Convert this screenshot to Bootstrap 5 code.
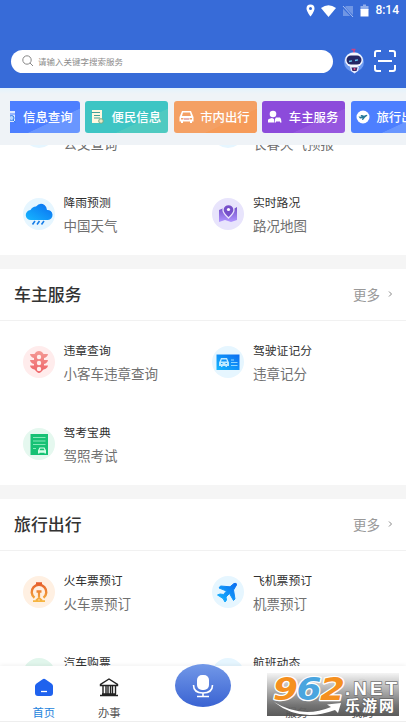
<!DOCTYPE html>
<html lang="zh-CN">
<head>
<meta charset="utf-8">
<meta name="viewport" content="width=device-width, initial-scale=1">
<title>首页</title>
<link href="https://cdn.jsdelivr.net/npm/bootstrap@5.3.0/dist/css/bootstrap.min.css" rel="stylesheet">
<style>
body{font-family:"Noto Sans CJK SC",sans-serif;height:722px;overflow:hidden;color:#333;background:#fff}
svg{display:block;flex:none}
.app-head{height:88px;background:#376bd8}
.status{height:21px;padding-right:7px;gap:6px;color:#fff;font:500 12px/21px Roboto,sans-serif}
.search-row{margin-top:28px;padding:0 10px 0 11px;height:24px}
.search{width:322px;height:23px;padding-left:11px;gap:4px;font-size:8.5px;color:#8c8c8c}
.robot{margin-left:10px}
.scan{margin-left:9px}
.strip{height:57px;background:linear-gradient(#e3f3fd,#eff3f7 6px);padding:13px 0 0 10px}
.chips{gap:5.6px;margin-left:-13.5px}
.chip{width:83px;height:32px;border-radius:3px;color:#fff;font-size:12.4px;font-weight:500;padding-left:5px;gap:6.5px;white-space:nowrap}
.c-blue{background:linear-gradient(155deg,#4d7fff 65%,#6996ff 66%)}
.c-teal{background:linear-gradient(155deg,#3ec5c4 65%,#4fcac1 66%)}
.c-orange{background:linear-gradient(155deg,#f4a064 65%,#f69b59 66%)}
.c-purple{background:linear-gradient(155deg,#8c4bdb 65%,#9657df 66%)}
.feed{min-height:0}
.feed-inner{margin-top:-54px}
.tiles{display:grid;grid-template-columns:189.5px 1fr;padding-left:22.5px}
.tile{height:82px;gap:9px}
.t1{font-size:11.8px;line-height:18px;color:#303030}
.t2{font-size:13.5px;line-height:20px;color:#707070;margin-top:4px}
.band{height:14px;background:#f5f5f5}
.sec{height:52px;border-bottom:1px solid #f1f1f1;padding:0 13px 1px 14px}
.sec-title{font-size:16.9px;font-weight:500;line-height:24px}
.more{font-size:13.5px;color:#999;gap:8px}
.tabbar{height:56px;background:#fff;box-shadow:0 -1px 4px #0000000f;border-bottom:1px solid #eee;padding-left:11px}
.tab{width:65.5px;font-size:11.3px;line-height:16px;color:#555;padding-top:11px;gap:7px}
.tab.on{color:#2584dc}
.mic{width:56px;margin:-3px 33px 0 33px}
.wm{right:7px;top:7px;width:132px;height:43px}
</style>
</head>
<body class="d-flex flex-column">
<header class="app-head flex-shrink-0">
  <div class="status d-flex justify-content-end align-items-center">
    <svg width="9" height="13" viewBox="0 0 9 13"><path fill="#fff" fill-rule="evenodd" d="M4.500.5A4 4 0 0 0 .5 4.500C.5 7.500 4.500 12.500 4.500 12.500S8.500 7.500 8.500 4.500A4 4 0 0 0 4.500.5M4.500 3a1.500 1.500 0 1 1 0 3a1.500 1.500 0 0 1 0-3"/></svg>
    <svg width="15" height="12" viewBox="0 0 15 12"><path fill="#fff" d="M0 3Q7.500-2.600 15 3L7.500 12z"/></svg>
    <svg width="12" height="12" viewBox="0 0 12 12"><path fill="#7096e4" d="M4 1h7v10H1V4z"/><path stroke="#376bd8" stroke-width="2.500" d="M0 1l11 11"/><path stroke="#a9c0f1" d="M1 1l10 11"/></svg>
    <svg width="9" height="13" viewBox="0 0 9 13"><path fill="#92aeea" d="M.5 2H3V.5h3V2h2.500v4h-8z"/><path fill="#fff" d="M.5 5h8v7.500h-8z"/></svg>
    <span>8:14</span>
  </div>
  <div class="search-row d-flex align-items-center">
    <div class="search bg-white rounded-pill d-flex align-items-center">
      <svg width="12" height="12" viewBox="0 0 12 12" fill="none" stroke="#888"><circle cx="5" cy="5" r="4.200"/><path d="M8 8l3 3"/></svg>
      <span>请输入关键字搜索服务</span>
    </div>
    <svg class="robot" width="22" height="28" viewBox="0 0 22 28"><circle cx="11" cy="15" r="10" fill="#709cf0"/><path d="M11 6V2M8.500 2.500h4" stroke="#c94384" stroke-width="1.500"/><ellipse cx="11" cy="13" rx="9" ry="7.500" fill="#f4f7ff"/><rect x="3.500" y="8.500" width="15" height="9" rx="4.500" fill="#252765"/><path d="M6 14.500l3-.6M12 13.500l3-.6" stroke="#63c9f7" stroke-width="1.300"/><path d="M7 20h9l-1 4-3.500 2.500L8 24z" fill="#e3eaff"/><path d="M8.500 20.500h6l-1 3.500h-4z" fill="#3a2765"/><circle cx="11.500" cy="22" r="1" fill="#ee5588"/></svg>
    <svg class="scan" width="22" height="22" viewBox="0 0 22 22" fill="none" stroke="#fff" stroke-width="2"><path d="M7 1H3Q1 1 1 3v4M15 1h4q2 0 2 2v4M1 15v4q0 2 2 2h4M21 15v4q0 2-2 2h-4M4 11h14"/></svg>
  </div>
</header>

<div class="strip flex-shrink-0">
  <div class="overflow-hidden">
    <div class="chips d-flex">
      <div class="chip c-blue d-flex align-items-center flex-shrink-0"><svg width="15" height="16" viewBox="0 0 15 16"><rect x="1" y="2" width="12" height="11" fill="#dfeaff"/><path d="M1 5h12" stroke="#4d7fff"/><circle cx="9.500" cy="9" r="2.500" fill="#b5d4ff" stroke="#2e7ce5"/><path d="M11 11l2.500 2.500" stroke="#2e7ce5"/></svg>信息查询</div>
      <div class="chip c-teal d-flex align-items-center flex-shrink-0"><svg width="15" height="17" viewBox="0 0 15 17"><path d="M2 1h10v13H2z" fill="#fff8df"/><path d="M1.500 3.500H10M4 6.500h6M4 9h6" stroke="#429f97" stroke-width="1.200"/><circle cx="11" cy="12" r="2.300" fill="#eee9c7" stroke="#75aa87"/></svg>便民信息</div>
      <div class="chip c-orange d-flex align-items-center flex-shrink-0"><svg width="15" height="14" viewBox="0 0 15 14"><path fill="#fff" fill-rule="evenodd" d="M3 1h9l2 5 .5 1v4.500H13V13h-2v-1.500H4V13H2v-1.500H.5V7L1 6zm1 1.500L3 6h9l-1-3.500zM2 8v1.500h2.500V8zm8.500 0v1.500H13V8z"/><path d="M5 9h5" stroke="#cc6670"/></svg>市内出行</div>
      <div class="chip c-purple d-flex align-items-center flex-shrink-0"><svg width="15" height="14" viewBox="0 0 15 14" fill="#fff"><circle cx="6" cy="4" r="3.300"/><path d="M1 12.500V10q0-1 4-2l2 1V12.500zM8 9l1-1.500h4L14 9l.5 3.500H13v-1H9v1H7.500z"/></svg>车主服务</div>
      <div class="chip c-blue d-flex align-items-center flex-shrink-0"><svg width="14" height="14" viewBox="0 0 14 14"><circle cx="7" cy="7" r="6.500" fill="#fff"/><path d="M2.500 6.500l3 .2L4.500 5H6l2 .8 2.500-1 1 .8-2.500 2L7 10H6l.5-1.800L4 8.500z" fill="#267a99"/></svg>旅行出行</div>
    </div>
  </div>
</div>

<main class="feed flex-fill overflow-hidden">
  <div class="feed-inner">
    <div class="tiles">
      <div class="tile d-flex align-items-center"><svg width="32" height="32"><circle cx="16" cy="16" r="16" fill="#e6f6ff"/></svg><div><div class="t1">公交查询</div><div class="t2">公交查询</div></div></div>
      <div class="tile d-flex align-items-center"><svg width="32" height="32"><circle cx="16" cy="16" r="16" fill="#e6f6ff"/></svg><div><div class="t1">天气预报</div><div class="t2">长春天气预报</div></div></div>
      <div class="tile d-flex align-items-center">
        <svg width="32" height="32" viewBox="0 0 32 32"><defs><linearGradient id="gb" x1="1" y1="0" x2="0" y2="1"><stop stop-color="#0a6cf0"/><stop offset="1" stop-color="#16b7ff"/></linearGradient></defs><circle cx="16" cy="16" r="16" fill="#e6f6ff"/><path fill="url(#gb)" d="M8 22A5 5 0 0 1 7.500 12A7 7 0 0 1 13 8.500Q17 4 21.500 7Q24 9 24 12A5 5 0 0 1 25 22z"/><path d="M12 23l-2.500 3.500M16.500 23L14 26.500M21 23l-2.500 3.500" stroke="#167de8" stroke-width="1.600"/></svg>
        <div><div class="t1">降雨预测</div><div class="t2">中国天气</div></div></div>
      <div class="tile d-flex align-items-center">
        <svg width="32" height="32" viewBox="0 0 32 32"><defs><linearGradient id="gp" x1="0" y1="0" x2="0" y2="1"><stop stop-color="#7350c7"/><stop offset="1" stop-color="#b094ff"/></linearGradient></defs><circle cx="16" cy="16" r="16" fill="#e8e4fc"/><path fill="url(#gp)" d="M7 12l5-2 8 2 5-3v13l-6 2-6-2-6 2z"/><path fill="#7650ca" stroke="#e8e4fc" stroke-width="1.300" d="M16.500 20Q11 15 11 12a5.500 5.500 0 0 1 11 0Q22 15 16.500 20z"/><circle cx="16.500" cy="11.500" r="1.600" fill="#fff"/></svg>
        <div><div class="t1">实时路况</div><div class="t2">路况地图</div></div></div>
    </div>
    <div class="band"></div>
    <div class="sec d-flex align-items-center justify-content-between"><span class="sec-title">车主服务</span><span class="more d-flex align-items-center">更多<svg width="5" height="8" viewBox="0 0 5 8" fill="none" stroke="#888"><path d="M1 1.500L3.500 4 1 6.500"/></svg></span></div>
    <div class="tiles">
      <div class="tile d-flex align-items-center">
        <svg width="32" height="32" viewBox="0 0 32 32"><defs><linearGradient id="gr" x1="0" y1="0" x2="0" y2="1"><stop stop-color="#f49a95"/><stop offset="1" stop-color="#ee6266"/></linearGradient></defs><circle cx="16" cy="16" r="16" fill="#ffecec"/><path fill="url(#gr)" d="M13 6q3-2 6 0l1.500 2H25q-.5 3-4 4v2H25q-.5 3-4 4v1.500H25q-.5 3-4.500 4L18 26q-2 2-4 0l-2.500-2.500Q7.500 22.500 7 19.500h4V18Q7.500 17 7 14h4v-2Q7.500 11 7 8h4.500z"/><g fill="#fff0ee"><circle cx="16" cy="11" r="2.200"/><circle cx="16" cy="17" r="2.200"/><circle cx="16" cy="23" r="2.200"/></g></svg>
        <div><div class="t1">违章查询</div><div class="t2">小客车违章查询</div></div></div>
      <div class="tile d-flex align-items-center">
        <svg width="32" height="32" viewBox="0 0 32 32"><circle cx="16" cy="16" r="16" fill="#e6f6ff"/><path fill="url(#gb)" d="M4.500 8.500h23V24h-23z"/><path fill="#bfe9ff" fill-rule="evenodd" d="M9 12h6l1.500 3.500.5 1V20h-2v1h-1.500v-1h-3v1H9v-1H7v-3.500l.5-1zm.8 1.400L9 15.500h6l-.8-2.100zM9 17v1h1.500v-1zm4.500 0v1H15v-1z"/><path d="M19 14h3M19 16.500h6.500M19 19.500h6.500" stroke="#8ed6ff" stroke-width="1.200"/></svg>
        <div><div class="t1">驾驶证记分</div><div class="t2">违章记分</div></div></div>
      <div class="tile d-flex align-items-center">
        <svg width="32" height="32" viewBox="0 0 32 32"><circle cx="16" cy="16" r="16" fill="#e5f8ef"/><path fill="#16c174" d="M7.500 6h17.500v21H7.500z"/><path d="M10 9.500h12.500M10 13h12.500M10 16.500h12.500M10 20.500h3" stroke="#84e9b8"/><path fill="#d7ffe9" fill-rule="evenodd" d="M16.500 19.500h5l1.500 3v3h-1.500v-.8h-5v.8H15v-3zm.8 1l-.8 1.800h5l-.8-1.800z"/></svg>
        <div><div class="t1">驾考宝典</div><div class="t2">驾照考试</div></div></div>
    </div>
    <div class="band"></div>
    <div class="sec d-flex align-items-center justify-content-between"><span class="sec-title">旅行出行</span><span class="more d-flex align-items-center">更多<svg width="5" height="8" viewBox="0 0 5 8" fill="none" stroke="#888"><path d="M1 1.500L3.500 4 1 6.500"/></svg></span></div>
    <div class="tiles">
      <div class="tile d-flex align-items-center">
        <svg width="32" height="32" viewBox="0 0 32 32"><defs><linearGradient id="go" gradientUnits="userSpaceOnUse" x1="0" y1="6" x2="0" y2="26"><stop stop-color="#e4582a"/><stop offset="1" stop-color="#f6b840"/></linearGradient></defs><circle cx="16" cy="16" r="16" fill="#fff0e2"/><g fill="none" stroke="url(#go)"><path stroke-width="2.400" d="M11.500 21.800A7.300 7.300 0 1 1 20.500 21.800"/><path stroke-width="2.500" d="M13 7.500h6M13.500 15.500h5"/><path stroke-width="2.200" d="M16 15v6.500"/><path stroke-width="1.800" d="M10 25.200h12M13 24.500l3-2.500 3 2.500"/></g></svg>
        <div><div class="t1">火车票预订</div><div class="t2">火车票预订</div></div></div>
      <div class="tile d-flex align-items-center">
        <svg width="32" height="32" viewBox="0 0 32 32"><circle cx="16" cy="16" r="16" fill="#e6f6ff"/><path fill="url(#gb)" stroke="url(#gb)" stroke-linejoin="round" d="M5.500 19l2.500-1 3.500.5L14.500 15 7 12l1.500-2 9.500.8L22 7.500Q25 6.500 24.500 9L21.500 14l1.500 9-1.500 1.500-4-7-3.500 3.500.5 3-1.500 2-2-3.500z"/></svg>
        <div><div class="t1">飞机票预订</div><div class="t2">机票预订</div></div></div>
      <div class="tile d-flex align-items-center"><svg width="32" height="32"><circle cx="16" cy="16" r="16" fill="#e1f6ec"/></svg><div><div class="t1">汽车购票</div><div class="t2">汽车购票</div></div></div>
      <div class="tile d-flex align-items-center"><svg width="32" height="32"><circle cx="16" cy="16" r="16" fill="#e6f6ff"/></svg><div><div class="t1">航班动态</div><div class="t2">航班动态</div></div></div>
    </div>
  </div>
</main>

<nav class="tabbar position-relative d-flex flex-shrink-0">
  <div class="tab on d-flex flex-column align-items-center">
    <svg width="20" height="20" viewBox="0 0 20 20"><path fill="#1f62ee" d="M8.300 2.500Q10 1 11.700 2.500L17.500 6.500Q19 7.500 19 9v7q0 3-3 3H4q-3 0-3-3V9q0-1.500 1.500-2.500z"/><path d="M7 14.500h6" stroke="#fff" stroke-width="1.300"/></svg>首页</div>
  <div class="tab d-flex flex-column align-items-center">
    <svg width="20" height="20" viewBox="0 0 20 20" fill="none" stroke="#222" stroke-width="1.400"><path d="M1.500 8.500v-1L10 2l8.500 5.500v1zM3 17h14M1 18.500h18M4 9v8M7 9v8M9 9v8M11.500 9v8M13.500 9v8M16.500 9v8"/></svg>办事</div>
  <div class="mic">
    <svg width="56" height="44" viewBox="0 0 56 44"><defs><linearGradient id="gm" x1="0" y1="0" x2="0" y2="1"><stop stop-color="#7298e8"/><stop offset="1" stop-color="#3a63d2"/></linearGradient></defs><ellipse cx="28" cy="22.500" rx="28" ry="21.500" fill="url(#gm)"/><rect x="22" y="12" width="12" height="15" rx="5" fill="#fff"/><path d="M18.500 22q0 8 9.500 8t9.500-8M28 30v4M22 33.500h12" fill="none" stroke="#fff" stroke-width="1.600"/></svg></div>
  <div class="tab d-flex flex-column align-items-center"><svg width="20" height="20" viewBox="0 0 20 20" fill="none" stroke="#333"><rect x="3" y="3" width="14" height="14"/></svg>服务</div>
  <div class="tab d-flex flex-column align-items-center"><svg width="20" height="20" viewBox="0 0 20 20" fill="none" stroke="#333"><circle cx="10" cy="6" r="4"/><path d="M2 18q8-10 16 0"/></svg>我的</div>
  <svg class="wm position-absolute" viewBox="0 0 132 43">
    <defs><linearGradient id="gw" x1="0" y1="0" x2="0" y2="1"><stop stop-color="#f4f4f4" stop-opacity=".96"/><stop offset=".3" stop-color="#bdbdbd" stop-opacity=".96"/><stop offset=".75" stop-color="#6e6e6e" stop-opacity=".96"/><stop offset="1" stop-color="#484848" stop-opacity=".9"/></linearGradient></defs>
    <rect width="132" height="43" fill="url(#gw)"/>
    <g font-family="DejaVu Sans,sans-serif" font-weight="700" font-style="italic" font-size="32" stroke="#fff" stroke-width="2.500" paint-order="stroke" stroke-linejoin="round">
      <text x="6" y="27" textLength="25" lengthAdjust="spacingAndGlyphs" fill="#f5901f">9</text><text x="29.500" y="27" textLength="25" lengthAdjust="spacingAndGlyphs" fill="#4aa5df">6</text><text x="53" y="27" textLength="25" lengthAdjust="spacingAndGlyphs" fill="#f5901f">2</text></g>
    <path d="M7 29Q35 46 64 34l-4-2.500L74 30l-3 10-3-3Q33 50 7 29" fill="#fff"/>
    <text x="78" y="21.500" textLength="52" lengthAdjust="spacing" font-family="Liberation Sans,sans-serif" font-weight="700" font-size="18.500" fill="#fff" stroke="#777" stroke-width="1.500" paint-order="stroke">.NET</text>
    <text x="78" y="38" textLength="49" font-family="Noto Sans CJK SC,sans-serif" font-weight="700" font-size="15" fill="#fff" stroke="#666" stroke-width="1.500" paint-order="stroke">乐游网</text>
  </svg>
</nav>
<script src="https://cdn.jsdelivr.net/npm/bootstrap@5.3.0/dist/js/bootstrap.bundle.min.js"></script>
</body>
</html>
